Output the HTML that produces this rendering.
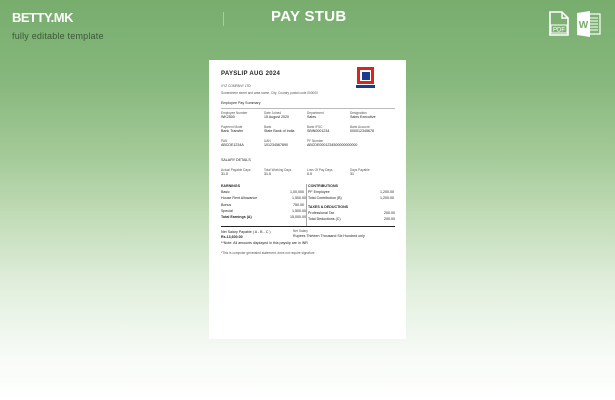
<!DOCTYPE html>
<html><head><meta charset="utf-8"><style>
*{margin:0;padding:0;box-sizing:border-box}
body{width:615px;height:400px;overflow:hidden;position:relative;font-family:"Liberation Sans",sans-serif;
background:linear-gradient(180deg,#78ad6e 0%,#86b77c 20%,#a6cb9a 40%,#c3ddb9 55%,#e2efde 72%,#f6faf5 88%,#ffffff 100%)}
.a{position:absolute;white-space:nowrap}
.t{font-size:3.2px;color:#555}
.v{font-size:3.6px;color:#222}
.b{font-weight:bold}
</style></head><body>
<div class="a b" style="left:12px;top:10px;font-size:13px;color:#fff;letter-spacing:-0.5px">BETTY.MK</div>
<div class="a" style="left:12px;top:31px;font-size:9px;color:#3a5834;letter-spacing:0.2px">fully editable template</div>
<div class="a" style="left:223px;top:12px;width:1px;height:14px;background:#a9cda0"></div>
<div class="a b" style="left:271px;top:8px;font-size:15px;color:#fff;letter-spacing:0.3px">PAY STUB</div>
<svg class="a" style="left:548px;top:11px" width="22" height="26" viewBox="0 0 22 26"><path d="M2 1h12l6 6v17H2z" fill="none" stroke="#fff" stroke-width="1.6"/><path d="M14 1v6h6" fill="none" stroke="#fff" stroke-width="1.4"/><rect x="3" y="14" width="16" height="8" fill="none" stroke="#fff" stroke-width="1"/><text x="11" y="20.5" font-size="6" fill="#fff" text-anchor="middle" font-family="Liberation Sans">PDF</text></svg>
<svg class="a" style="left:576px;top:11px" width="26" height="26" viewBox="0 0 26 26"><rect x="9" y="3" width="15" height="20" fill="none" stroke="#fff" stroke-width="1.2"/><path d="M13 7h9M13 10h9M13 13h9M13 16h9M13 19h9" stroke="#fff" stroke-width="1"/><path d="M1 2l13-2v26L1 24z" fill="#fff"/><text x="7.5" y="17" font-size="10" font-weight="bold" fill="#78ad6e" text-anchor="middle" font-family="Liberation Sans">W</text></svg>

<div class="a" style="left:209px;top:60px;width:197px;height:279px;background:#fff"></div>
<div class="a b" style="left:221px;top:71px;font-size:6px;color:#222;letter-spacing:0.3px">PAYSLIP AUG 2024</div>
<div class="a" style="left:357px;top:67px;width:17px;height:17px;border:3.5px solid #d9261c;"></div>
<div class="a" style="left:361.5px;top:71.5px;width:8px;height:8px;background:#1b3b8f"></div>
<div class="a" style="left:356px;top:85px;width:19px;height:3px;background:#1b3b8f"></div>
<div class="a t" style="left:221px;top:84px">XYZ COMPANY LTD</div>
<div class="a t" style="left:221px;top:91px">Somewhere street and area name, City, Country postal code 000000</div>
<div class="a v" style="left:221px;top:101px">Employee Pay Summary</div>
<div class="a" style="left:221px;top:108px;width:174px;height:1px;background:#bbb"></div>

<div class="a t" style="left:221px;top:111px">Employee Number</div><div class="a v" style="left:221px;top:115px">WK2500</div>
<div class="a t" style="left:264px;top:111px">Date Joined</div><div class="a v" style="left:264px;top:115px">15 August 2020</div>
<div class="a t" style="left:307px;top:111px">Department</div><div class="a v" style="left:307px;top:115px">Sales</div>
<div class="a t" style="left:350px;top:111px">Designation</div><div class="a v" style="left:350px;top:115px">Sales Executive</div>
<div class="a t" style="left:221px;top:125px">Payment Mode</div><div class="a v" style="left:221px;top:129px">Bank Transfer</div>
<div class="a t" style="left:264px;top:125px">Bank</div><div class="a v" style="left:264px;top:129px">State Bank of India</div>
<div class="a t" style="left:307px;top:125px">Bank IFSC</div><div class="a v" style="left:307px;top:129px">SBIN0001234</div>
<div class="a t" style="left:350px;top:125px">Bank Account</div><div class="a v" style="left:350px;top:129px">000012345678</div>
<div class="a t" style="left:221px;top:139px">PAN</div><div class="a v" style="left:221px;top:143px">ABCDE1234A</div>
<div class="a t" style="left:264px;top:139px">UAN</div><div class="a v" style="left:264px;top:143px">101234567890</div>
<div class="a t" style="left:307px;top:139px">PF Number</div><div class="a v" style="left:307px;top:143px">ABCDE0001234500000000000</div>

<div class="a v" style="left:221px;top:158px">SALARY DETAILS</div>
<div class="a t" style="left:221px;top:168px">Actual Payable Days</div><div class="a v" style="left:221px;top:172px">31.0</div>
<div class="a t" style="left:264px;top:168px">Total Working Days</div><div class="a v" style="left:264px;top:172px">31.0</div>
<div class="a t" style="left:307px;top:168px">Loss Of Pay Days</div><div class="a v" style="left:307px;top:172px">0.0</div>
<div class="a t" style="left:350px;top:168px">Days Payable</div><div class="a v" style="left:350px;top:172px">31</div>

<div class="a" style="left:306px;top:184px;width:1px;height:42px;background:#aaa"></div>
<div class="a v b" style="left:221px;top:184px">EARNINGS</div>
<div class="a v b" style="left:308px;top:184px">CONTRIBUTIONS</div>
<div class="a v" style="left:221px;top:190px">Basic</div><div class="a v" style="left:290px;top:190px">1,00,000</div>
<div class="a v" style="left:221px;top:196px">House Rent Allowance</div><div class="a v" style="left:292px;top:196px">1,500.00</div>
<div class="a v" style="left:221px;top:203px">Bonus</div><div class="a v" style="left:293px;top:203px">750.00</div>
<div class="a v" style="left:221px;top:209px">Special</div><div class="a v" style="left:292px;top:209px">1,500.00</div>
<div class="a v b" style="left:221px;top:215px">Total Earnings (A)</div><div class="a v" style="left:290px;top:215px">15,000.00</div>
<div class="a v" style="left:308px;top:190px">PF Employee</div><div class="a v" style="left:380px;top:190px">1,200.00</div>
<div class="a v" style="left:308px;top:196px">Total Contribution (B)</div><div class="a v" style="left:380px;top:196px">1,200.00</div>
<div class="a v b" style="left:308px;top:205px">TAXES &amp; DEDUCTIONS</div>
<div class="a v" style="left:308px;top:211px">Professional Tax</div><div class="a v" style="left:384px;top:211px">200.00</div>
<div class="a v" style="left:308px;top:217px">Total Deductions (C)</div><div class="a v" style="left:384px;top:217px">200.00</div>
<div class="a" style="left:221px;top:226px;width:174px;height:1.2px;background:#222"></div>

<div class="a v" style="left:221px;top:230px">Net Salary Payable ( A - B - C )</div>
<div class="a v b" style="left:221px;top:235px">Rs.13,600.00</div>
<div class="a t" style="left:293px;top:229px">Net Salary</div>
<div class="a v" style="left:293px;top:234px">Rupees Thirteen Thousand Six Hundred only</div>
<div class="a v" style="left:221px;top:241px">**Note: All amounts displayed in this payslip are in INR</div>
<div class="a t" style="left:221px;top:251px">*This is computer generated statement, does not require signature</div>
</body></html>
